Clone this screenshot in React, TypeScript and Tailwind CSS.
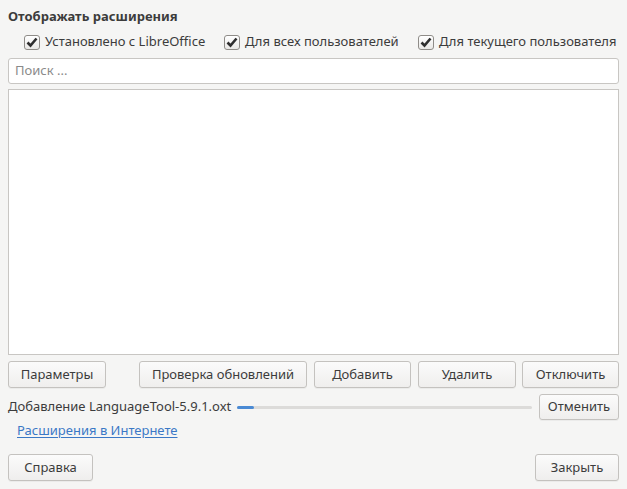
import React from "react";

const font = { fontFamily: '"Noto Sans", "DejaVu Sans", sans-serif' };

function Check({ label, className }: { label: string; className: string }) {
  return (
    <label className={`flex items-center gap-[5px] ${className}`}>
      <span className="flex h-[15px] w-[16px] items-center justify-center rounded-[3px] border border-[#8f8c88] bg-gradient-to-b from-[#ffffff] to-[#e9e8e6] shadow-[inset_0_1px_0_#fff]">
        <svg width="12" height="11" viewBox="0 0 12 11">
          <path d="M1.5 5.5 L4.5 8.5 L10.5 1.5" fill="none" stroke="#2e2e2e" strokeWidth="2.6" />
        </svg>
      </span>
      <span>{label}</span>
    </label>
  );
}

function Button({ children, className }: { children: React.ReactNode; className: string }) {
  return (
    <button
      className={`flex items-center justify-center rounded-[3px] border border-[#c4c2bf] bg-gradient-to-b from-[#fbfbfb] to-[#efeeed] text-[#3c3c3c] shadow-[0_1px_0_rgba(0,0,0,0.04)] ${className}`}
    >
      {children}
    </button>
  );
}

export default function App() {
  return (
    <div
      className="flex h-[489px] w-[627px] flex-col bg-[#f5f5f4] px-[8px] text-[13px] text-[#3c3c3c]"
      style={font}
    >
      <div className="mt-[7px] h-[18px] font-bold leading-[18px]">Отображать расширения</div>

      <div className="mt-[7px] flex h-[20px] items-center">
        <Check label="Установлено с LibreOffice" className="ml-[16px] w-[200px]" />
        <Check label="Для всех пользователей" className="w-[194px]" />
        <Check label="Для текущего пользователя" className="" />
      </div>

      <div className="mt-[6px] flex h-[26px] w-[611px] items-center rounded-[3px] border border-[#c8c6c3] bg-white px-[6px] text-[#8a8a8a]">
        Поиск ...
      </div>

      <div className="mt-[5px] h-[266px] w-[611px] border border-[#c8c6c3] bg-white" />

      <div className="mt-[6px] flex h-[27px] w-[611px]">
        <Button className="w-[98px]">Параметры</Button>
        <Button className="ml-[33px] w-[168px]">Проверка обновлений</Button>
        <Button className="ml-[7px] w-[97px]">Добавить</Button>
        <Button className="ml-[7px] w-[98px]">Удалить</Button>
        <Button className="ml-[6px] w-[97px]">Отключить</Button>
      </div>

      <div className="mt-[6px] flex h-[26px] w-[611px] items-center">
        <span className="whitespace-nowrap">Добавление LanguageTool-5.9.1.oxt</span>
        <div className="ml-[6px] flex h-[3px] flex-1 rounded-full bg-[#dcdbd9]">
          <div className="h-[3px] w-[17px] rounded-full bg-[#4a8ad4]" />
        </div>
        <Button className="ml-[7px] h-[26px] w-[80px]">Отменить</Button>
      </div>

      <div className="mt-[1px] h-[18px] pl-[9px] leading-[18px]">
        <a className="text-[#3b78c6] underline underline-offset-2">Расширения в Интернете</a>
      </div>

      <div className="mt-[15px] flex h-[27px] w-[611px] justify-between">
        <Button className="w-[85px]">Справка</Button>
        <Button className="w-[84px]">Закрыть</Button>
      </div>
    </div>
  );
}
